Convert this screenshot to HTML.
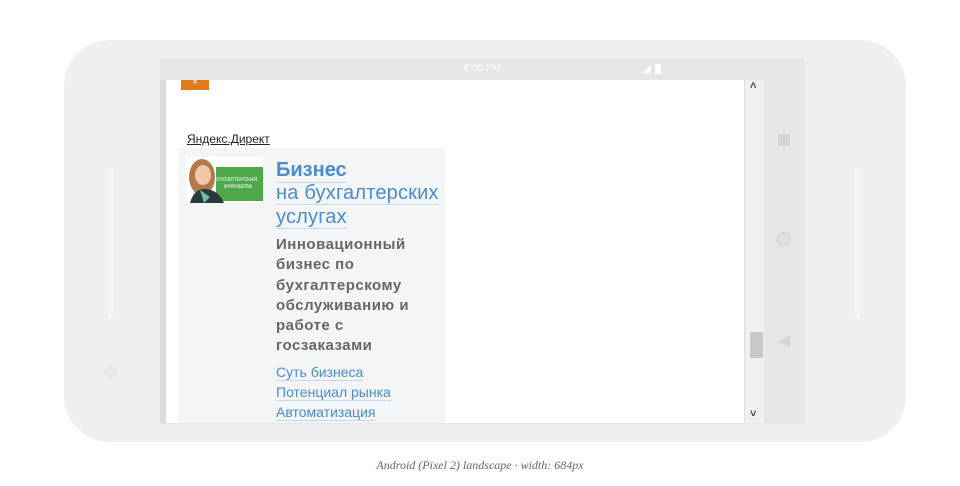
<!DOCTYPE html>
<html><head><meta charset="utf-8"><style>
*{margin:0;padding:0;box-sizing:border-box}
body{width:960px;height:486px;background:#fff;position:relative;overflow:hidden;font-family:"Liberation Sans",Arial,sans-serif}
.phone{position:absolute;left:64px;top:40px;width:842px;height:402px;background:#efefef;border-radius:46px}
.screen{position:absolute;left:160px;top:58px;width:645px;height:366px;background:#e6e6e6}
.status{position:absolute;left:0;top:0;width:645px;height:22px;color:#fff;font-size:10px;text-align:center;line-height:22px}
.content{position:absolute;left:6px;top:22px;width:578px;height:343px;background:#fff;overflow:hidden}
.lstrip{position:absolute;left:160px;top:80px;width:6px;height:343px;background:#dcdcdc}
.scroll{position:absolute;left:584px;top:22px;width:20px;height:343px;background:#f0f0f0;border-left:1px solid #ddd}
.thumb{position:absolute;left:5px;top:252px;width:13px;height:26px;background:#c8c8c8}
.close{position:absolute;left:15px;top:0;width:28px;height:10px;background:#e07a1a;color:#fff;font-size:10px;line-height:6px;text-align:center;overflow:hidden}
.yd{position:absolute;left:21px;top:52px;font-size:12px;color:#222;text-decoration:underline}
.ad{position:absolute;left:12px;top:68px;width:267px;height:280px;background:#f3f5f7}
.img{position:absolute;left:8px;top:9px;width:77px;height:46px;background:#fff}
.t{position:absolute;left:98px;color:#4a8ccc}
.t1{top:11px;font-size:20px;font-weight:bold}
.t2{top:33px;font-size:20px;line-height:24px;color:#4a8ccc;letter-spacing:.2px}
.t2 span,.t1{border-bottom:1px solid #c5d7ea}
.desc{position:absolute;left:98px;top:87px;font-size:15px;font-weight:bold;color:#666;line-height:20.3px;letter-spacing:.5px}
.links{position:absolute;left:98px;top:214px;font-size:14px;line-height:20px;color:#4a8ccc}
.links div span{border-bottom:1px solid #c5d7ea}
.nav{position:absolute;left:776px;color:#ccc}
.cap{position:absolute;left:0;width:960px;top:458px;text-align:center;font-family:"Liberation Serif",serif;font-style:italic;font-size:12px;color:#666}
.side{position:absolute;width:5px;background:#f5f5f5;border-radius:3px}
.arr{position:absolute;left:5px;font-size:11px;font-weight:bold;color:#444}
</style></head><body>
<div class="phone"></div>
<div class="side" style="left:108px;top:168px;height:150px"></div>
<div class="side" style="left:855px;top:168px;height:150px"></div>
<div style="position:absolute;left:104px;top:365px;width:14px;height:14px;border-radius:50%;background:#e8e8e8"></div>
<div class="screen">
 <div class="status">6:00 PM<span style="position:absolute;left:482px;top:7px;width:9px;height:8px;background:#fff;clip-path:polygon(100% 0,100% 100%,0 100%)"></span><span style="position:absolute;left:495px;top:6px;width:6px;height:10px;background:#fff"></span></div>
 <div class="content">
  <div class="close">×</div>
  <div class="yd">Яндекс.Директ</div>
  <div class="ad">
   <div class="img"><svg width="77" height="46"><rect x="20" y="10" width="57" height="34" fill="#4ea94a"/><rect x="0" y="0" width="30" height="46" fill="#fff"/><ellipse cx="16" cy="20" rx="13" ry="18" fill="#b07a4a"/><ellipse cx="17" cy="18" rx="8" ry="10" fill="#f0c8a8"/><path d="M4 46 Q8 32 18 32 Q32 32 38 46Z" fill="#2a3a3a"/><path d="M14 33 L24 40 L18 46Z" fill="#6cc0a8"/><text x="50" y="24" font-size="5" fill="#fff" text-anchor="middle" font-family="Liberation Sans">БУХГАЛТЕРСКАЯ</text><text x="52" y="31" font-size="5" fill="#fff" text-anchor="middle" font-family="Liberation Sans">ФРАНШИЗА</text></svg></div>
   <div class="t t1">Бизнес</div>
   <div class="t t2"><span>на бухгалтерских</span><br><span>услугах</span></div>
   <div class="desc">Инновационный<br>бизнес по<br>бухгалтерскому<br>обслуживанию и<br>работе с<br>госзаказами</div>
   <div class="links"><div><span>Суть бизнеса</span></div><div><span>Потенциал рынка</span></div><div><span>Автоматизация</span></div></div>
  </div>
 </div>
 <div class="scroll"><div class="arr" style="top:0">˄</div><div class="thumb"></div><div class="arr" style="top:328px">˅</div></div>
</div>
<div class="lstrip"></div>
<div class="nav" style="left:778px;top:134px;width:12px;height:12px;background:#d4d4d4"></div>
<div class="nav" style="left:776px;top:232px;width:15px;height:15px;border-radius:50%;border:2px solid #d8d8d8;background:#e0e0e0"></div>
<div class="nav" style="left:778px;top:335px;width:12px;height:13px;background:#d4d4d4;clip-path:polygon(100% 0,100% 100%,0 50%)"></div>
<div class="cap">Android (Pixel 2) landscape · width: 684px</div>
</body></html>
